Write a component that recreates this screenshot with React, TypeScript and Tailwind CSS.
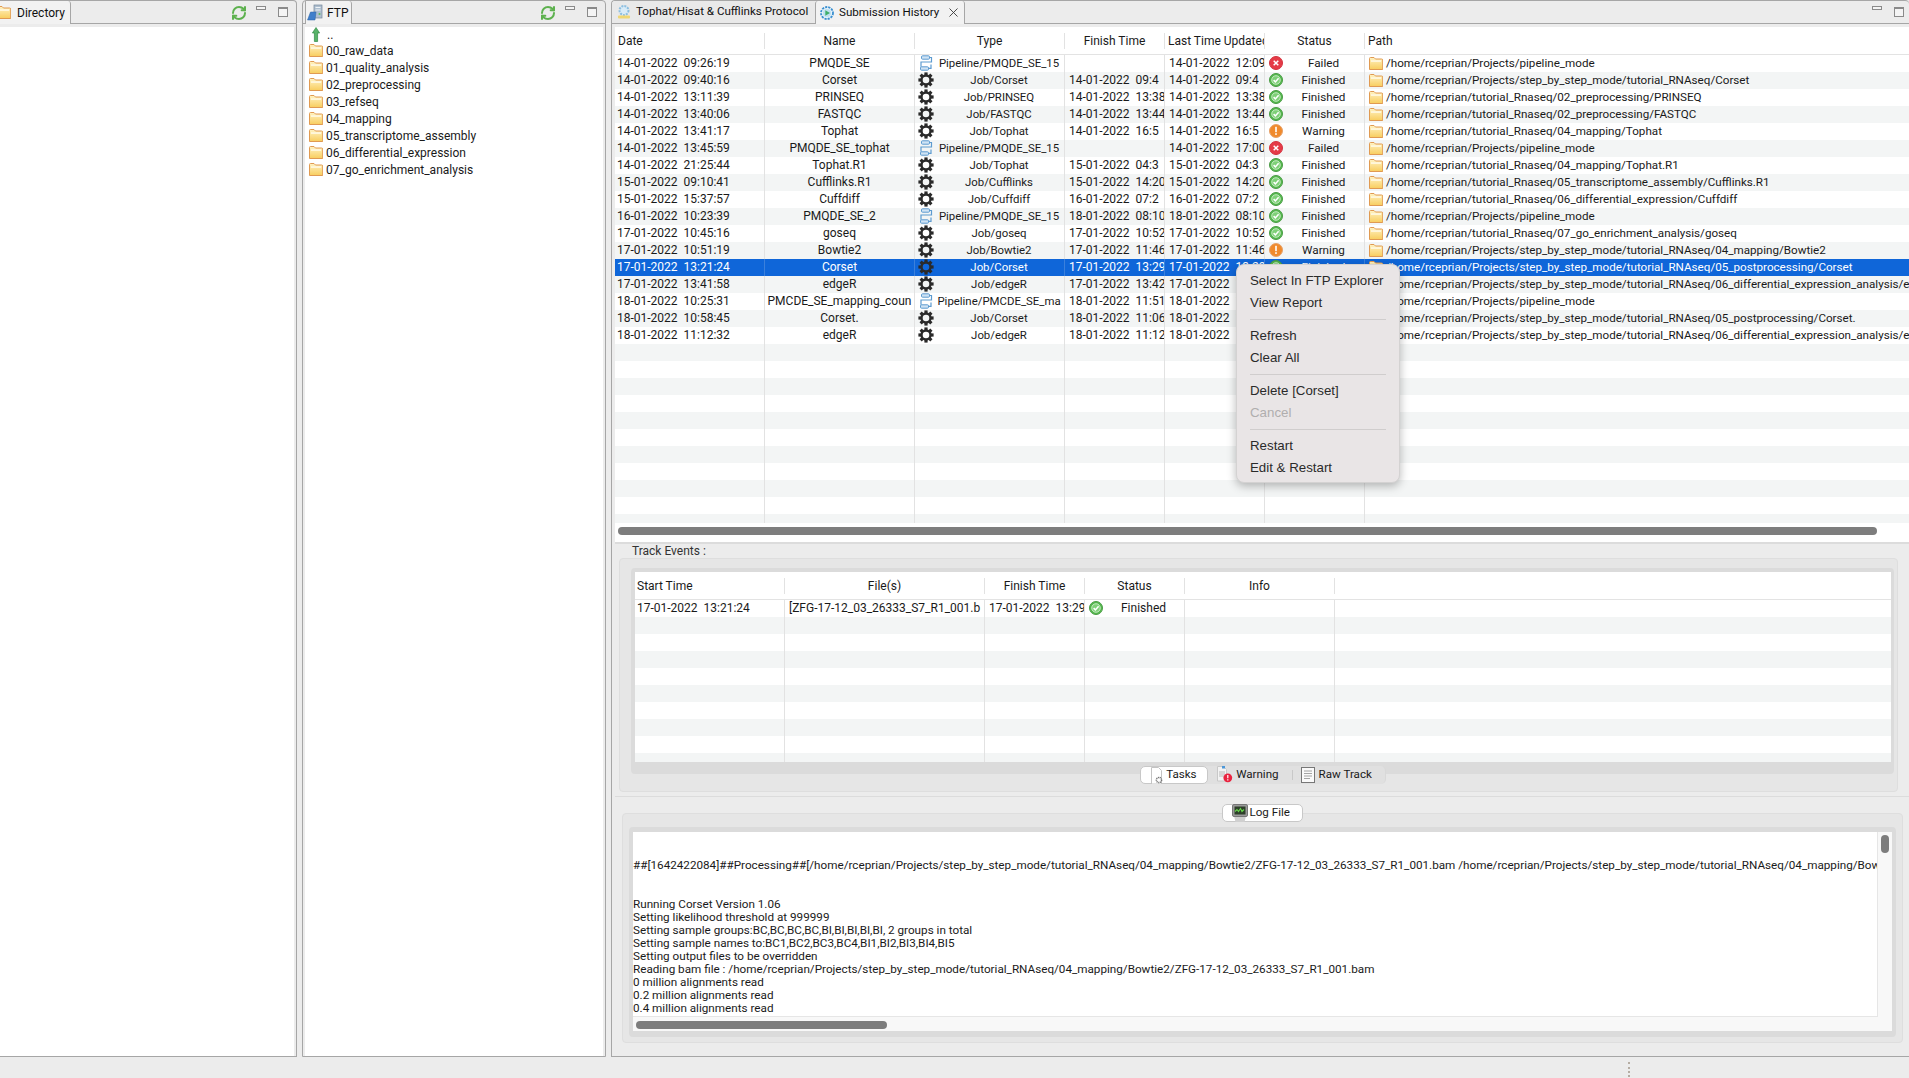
import { RefreshCw, X } from "lucide-react";

type Status = "Failed" | "Finished" | "Warning";

type Submission = {
  date: string;
  name: string;
  pipeline?: boolean;
  type: string;
  finish: string;
  updated: string;
  status: Status;
  path: string;
};

const P = "/home/rceprian/Projects";
const T = "/home/rceprian/tutorial_Rnaseq";
const S = "/home/rceprian/Projects/step_by_step_mode/tutorial_RNAseq";

const submissions: Submission[] = [
  { date: "14-01-2022  09:26:19", name: "PMQDE_SE", pipeline: true, type: "Pipeline/PMQDE_SE_15", finish: "", updated: "14-01-2022  12:09", status: "Failed", path: `${P}/pipeline_mode` },
  { date: "14-01-2022  09:40:16", name: "Corset", type: "Job/Corset", finish: "14-01-2022  09:4", updated: "14-01-2022  09:4", status: "Finished", path: `${S}/Corset` },
  { date: "14-01-2022  13:11:39", name: "PRINSEQ", type: "Job/PRINSEQ", finish: "14-01-2022  13:38", updated: "14-01-2022  13:38", status: "Finished", path: `${T}/02_preprocessing/PRINSEQ` },
  { date: "14-01-2022  13:40:06", name: "FASTQC", type: "Job/FASTQC", finish: "14-01-2022  13:44", updated: "14-01-2022  13:44", status: "Finished", path: `${T}/02_preprocessing/FASTQC` },
  { date: "14-01-2022  13:41:17", name: "Tophat", type: "Job/Tophat", finish: "14-01-2022  16:5", updated: "14-01-2022  16:5", status: "Warning", path: `${T}/04_mapping/Tophat` },
  { date: "14-01-2022  13:45:59", name: "PMQDE_SE_tophat", pipeline: true, type: "Pipeline/PMQDE_SE_15", finish: "", updated: "14-01-2022  17:00", status: "Failed", path: `${P}/pipeline_mode` },
  { date: "14-01-2022  21:25:44", name: "Tophat.R1", type: "Job/Tophat", finish: "15-01-2022  04:3", updated: "15-01-2022  04:3", status: "Finished", path: `${T}/04_mapping/Tophat.R1` },
  { date: "15-01-2022  09:10:41", name: "Cufflinks.R1", type: "Job/Cufflinks", finish: "15-01-2022  14:20", updated: "15-01-2022  14:20", status: "Finished", path: `${T}/05_transcriptome_assembly/Cufflinks.R1` },
  { date: "15-01-2022  15:37:57", name: "Cuffdiff", type: "Job/Cuffdiff", finish: "16-01-2022  07:2", updated: "16-01-2022  07:2", status: "Finished", path: `${T}/06_differential_expression/Cuffdiff` },
  { date: "16-01-2022  10:23:39", name: "PMQDE_SE_2", pipeline: true, type: "Pipeline/PMQDE_SE_15", finish: "18-01-2022  08:10", updated: "18-01-2022  08:10", status: "Finished", path: `${P}/pipeline_mode` },
  { date: "17-01-2022  10:45:16", name: "goseq", type: "Job/goseq", finish: "17-01-2022  10:52", updated: "17-01-2022  10:52", status: "Finished", path: `${T}/07_go_enrichment_analysis/goseq` },
  { date: "17-01-2022  10:51:19", name: "Bowtie2", type: "Job/Bowtie2", finish: "17-01-2022  11:46", updated: "17-01-2022  11:46", status: "Warning", path: `${S}/04_mapping/Bowtie2` },
  { date: "17-01-2022  13:21:24", name: "Corset", type: "Job/Corset", finish: "17-01-2022  13:29", updated: "17-01-2022  13:29", status: "Finished", path: `${S}/05_postprocessing/Corset` },
  { date: "17-01-2022  13:41:58", name: "edgeR", type: "Job/edgeR", finish: "17-01-2022  13:42", updated: "17-01-2022  13:42", status: "Finished", path: `${S}/06_differential_expression_analysis/edgeR` },
  { date: "18-01-2022  10:25:31", name: "PMCDE_SE_mapping_coun", pipeline: true, type: "Pipeline/PMCDE_SE_ma", finish: "18-01-2022  11:51", updated: "18-01-2022  11:51", status: "Finished", path: `${P}/pipeline_mode` },
  { date: "18-01-2022  10:58:45", name: "Corset.", type: "Job/Corset", finish: "18-01-2022  11:06", updated: "18-01-2022  11:06", status: "Finished", path: `${S}/05_postprocessing/Corset.` },
  { date: "18-01-2022  11:12:32", name: "edgeR", type: "Job/edgeR", finish: "18-01-2022  11:12", updated: "18-01-2022  11:12", status: "Finished", path: `${S}/06_differential_expression_analysis/edgeR` },
];

const ftpFolders = [
  "00_raw_data",
  "01_quality_analysis",
  "02_preprocessing",
  "03_refseq",
  "04_mapping",
  "05_transcriptome_assembly",
  "06_differential_expression",
  "07_go_enrichment_analysis",
];

const logLines = [
  "",
  "",
  "##[1642422084]##Processing##[/home/rceprian/Projects/step_by_step_mode/tutorial_RNAseq/04_mapping/Bowtie2/ZFG-17-12_03_26333_S7_R1_001.bam /home/rceprian/Projects/step_by_step_mode/tutorial_RNAseq/04_mapping/Bowtie2/ZFG-17-12_03_26333_S7_R2_001.bam",
  "",
  "",
  "Running Corset Version 1.06",
  "Setting likelihood threshold at 999999",
  "Setting sample groups:BC,BC,BC,BC,BI,BI,BI,BI,BI, 2 groups in total",
  "Setting sample names to:BC1,BC2,BC3,BC4,BI1,BI2,BI3,BI4,BI5",
  "Setting output files to be overridden",
  "Reading bam file : /home/rceprian/Projects/step_by_step_mode/tutorial_RNAseq/04_mapping/Bowtie2/ZFG-17-12_03_26333_S7_R1_001.bam",
  "0 million alignments read",
  "0.2 million alignments read",
  "0.4 million alignments read",
  "0.6 million alignments read",
];

const FolderIcon = ({ className = "" }: { className?: string }) => (
  <svg className={`w-[14px] h-[13px] shrink-0 ${className}`} viewBox="0 0 14 13">
    <defs>
      <linearGradient id="folderFill" x1="0" y1="0" x2="0" y2="1">
        <stop offset="0" stopColor="#fff3c4" />
        <stop offset="1" stopColor="#f8cd5e" />
      </linearGradient>
    </defs>
    <path d="M.5 12.5V1.5q0-1 1-1h3.5l1.5 1.5h6q1.2 0 1.2 1v9.5z" fill="url(#folderFill)" stroke="#e09a52" />
    <rect x="2" y="3.4" width="10" height="1.3" fill="#fffdf2" />
  </svg>
);

const GearIcon = () => (
  <svg className="w-[16px] h-[16px] shrink-0 -mt-[1px]" viewBox="0 0 16 16">
    <g fill="#2a2a2a">
      {[0, 45, 90, 135, 180, 225, 270, 315].map((angle) => (
        <rect key={angle} x="6.4" y="0.4" width="3.2" height="3.4" transform={`rotate(${angle} 8 8)`} />
      ))}
    </g>
    <circle cx="8" cy="8" r="4.5" fill="none" stroke="#2a2a2a" strokeWidth="2.4" />
  </svg>
);

const PipelineIcon = () => (
  <svg className="w-[16px] h-[16px] shrink-0 -mt-[1px]" viewBox="0 0 16 16">
    <g fill="#cfe3f4" stroke="#5d9bd0" strokeWidth="1">
      <rect x="3.5" y="0.8" width="8" height="3.4" rx="1" />
      <rect x="2.5" y="11.8" width="8" height="3.4" rx="1" />
    </g>
    <path d="M11.5 2.5h2v4.5H3v4.8M13 9.5v3.8h-2.5" fill="none" stroke="#5d9bd0" strokeWidth="1.2" />
  </svg>
);

const StatusIcon = ({ status }: { status: Status }) => {
  const fill = status === "Failed" ? "#e53b47" : status === "Warning" ? "#f08a2c" : "#55b94e";
  const ring = status === "Failed" ? "#d3323e" : status === "Warning" ? "#e6a26a" : "#4a9a45";
  return (
    <svg className="w-[14px] h-[14px] shrink-0 -mt-[1px]" viewBox="0 0 14 14">
      <circle cx="7" cy="7" r="6.5" fill={fill} stroke={ring} />
      {status === "Finished" && (
        <>
          <circle cx="7" cy="7" r="4.3" fill="#7ed077" stroke="#ffffff" strokeWidth="0.6" />
          <path d="M4.6 7.1l1.8 1.8 3.2-3.6" fill="none" stroke="#ffffff" strokeWidth="1.5" />
        </>
      )}
      {status === "Failed" && <path d="M4.7 4.7l4.6 4.6M9.3 4.7l-4.6 4.6" stroke="#ffffff" strokeWidth="1.5" />}
      {status === "Warning" && (
        <>
          <rect x="6.2" y="2.8" width="1.6" height="5.4" fill="#ffffff" />
          <rect x="6.2" y="9.2" width="1.6" height="1.7" fill="#ffffff" />
        </>
      )}
    </svg>
  );
};

const UpArrowIcon = () => (
  <svg className="w-[8px] h-[15px] shrink-0" viewBox="0 0 8 15">
    <path d="M4 .5L7.6 6H5.6v8.5H2.4V6H.4z" fill="#58b368" stroke="#2f8a45" strokeWidth="0.7" />
  </svg>
);

const FtpIcon = () => (
  <svg className="w-[16px] h-[17px] shrink-0" viewBox="0 0 16 17">
    <rect x="7" y="1" width="8" height="13" fill="#aebfcf" stroke="#76889a" strokeWidth="0.7" />
    <rect x="8.5" y="3" width="5" height="1" fill="#eef3f7" />
    <rect x="8.5" y="5.5" width="5" height="1" fill="#eef3f7" />
    <circle cx="12.5" cy="10" r="1" fill="#5cb85c" />
    <path d="M0.5 16l3-8h5.5l-1 8z" fill="#3f7fcb" stroke="#2b62a6" strokeWidth="0.5" />
  </svg>
);

const ProtocolIcon = () => (
  <svg className="w-[16px] h-[16px] shrink-0" viewBox="0 0 16 16">
    <circle cx="8" cy="6.5" r="4.5" fill="#d9ecf8" stroke="#8dbfe0" strokeWidth="2" strokeDasharray="2 1" />
    <rect x="2" y="11.5" width="12" height="3" rx="1" fill="#efd774" />
  </svg>
);

const HistoryIcon = () => (
  <svg className="w-[16px] h-[16px] shrink-0" viewBox="0 0 16 16">
    <circle cx="8" cy="8" r="6" fill="#e6f2fa" stroke="#3a8fd0" strokeWidth="1.8" strokeDasharray="2.2 1" />
    <circle cx="8" cy="8" r="4" fill="#bfe0f0" />
    <path d="M6.3 5.2L11 8l-4.7 2.8z" fill="#3fae6a" />
  </svg>
);

const TasksIcon = () => (
  <svg className="w-[15px] h-[17px] shrink-0" viewBox="0 0 15 17">
    <path d="M1.5.5h7l3 3V17h-10z" fill="#ffffff" stroke="#c4c4c4" />
    <circle cx="9" cy="13" r="2.6" fill="none" stroke="#777777" strokeWidth="1.5" strokeDasharray="1.2 .6" />
  </svg>
);

const WarningDocIcon = () => (
  <svg className="w-[16px] h-[17px] shrink-0" viewBox="0 0 16 17">
    <path d="M.5.5h6l3 3V15H.5z" fill="#f3f3f3" stroke="#c8c8c8" />
    <path d="M2 6h6M2 8h6M2 10h5" stroke="#a8a8a8" strokeWidth="0.8" />
    <rect x="5" y="0" width="3" height="2.5" fill="#4c97d8" />
    <circle cx="10.8" cy="11.8" r="4.4" fill="#e9233f" />
    <path d="M10.8 9v3.2M10.8 13.3v1.2" stroke="#ffffff" strokeWidth="1.2" />
  </svg>
);

const RawTrackIcon = () => (
  <svg className="w-[14px] h-[16px] shrink-0" viewBox="0 0 14 16">
    <rect x="0.5" y="0.5" width="13" height="15" fill="#fafafa" stroke="#777777" />
    <path d="M3 4h8M3 6.5h8M3 9h8M3 11.5h6" stroke="#9a9a9a" strokeWidth="0.9" />
  </svg>
);

const LogFileIcon = () => (
  <svg className="w-[16px] h-[18px] shrink-0" viewBox="0 0 16 18">
    <path d="M2 12h12l-1.5 6h-9z" fill="#d0d0d0" />
    <rect x="0.5" y="0.5" width="15" height="12" rx="1.5" fill="#9b9b9b" stroke="#777777" />
    <rect x="2.5" y="2.5" width="11" height="8" fill="#2e3f2a" />
    <path d="M3 7.5l2-2 1.5 2 2-3 1.5 3 2-2" fill="none" stroke="#66d84a" strokeWidth="1.1" />
  </svg>
);

const PanelControls = () => (
  <div className="flex items-start">
    <span className="block mt-[5px] w-[10px] h-[4px] border border-[#8a8a8a] bg-[#f4f4f4]" />
    <span className="block ml-[12px] mt-[6px] w-[10px] h-[10px] border border-[#8a8a8a] border-t-2 bg-[#f4f4f4]" />
  </div>
);

const TabBar = ({ children }: { children: React.ReactNode }) => (
  <div className="flex items-stretch h-[22px] border-b border-[#a6a6a6] box-content">{children}</div>
);

const SideTab = ({ icon, label, className }: { icon: React.ReactNode; label: string; className: string }) => (
  <div className={`flex items-center gap-[4px] h-[23px] border-r border-[#a6a6a6] bg-[#f2f2f2] rounded-tr-[3px] text-[12px] text-[#111] ${className}`}>
    {icon}
    <span>{label}</span>
  </div>
);

const Row = ({ item, index }: { item?: Submission; index: number }) => {
  const selected = index === 12;
  const rowColor = selected ? "bg-[#0f66d9] text-white" : index % 2 === 1 ? "bg-[#f3f5f5]" : "bg-white";
  const lineColor = selected ? "border-[#3b80dc]" : "border-[#e2e2e2]";
  const cell = `h-[17px] border-r overflow-hidden whitespace-pre flex items-center ${lineColor}`;
  return (
    <div className={`grid grid-cols-[150px_150px_150px_100px_100px_100px_1fr] h-[17px] leading-[17px] ${rowColor}`}>
      <div className={`${cell} pl-[2px]`}>{item?.date}</div>
      <div className={`${cell} justify-center`}>{item?.name}</div>
      <div className={`${cell} pl-[3px]`}>
        {item && (item.pipeline ? <PipelineIcon /> : <GearIcon />)}
        <span className="flex-1 text-center whitespace-nowrap overflow-hidden text-[11.4px]">{item?.type}</span>
      </div>
      <div className={`${cell} pl-[4px]`}>{item?.finish}</div>
      <div className={`${cell} pl-[4px]`}>{item?.updated}</div>
      <div className={`${cell} pl-[4px]`}>
        {item && <StatusIcon status={item.status} />}
        <span className="flex-1 text-center text-[11.7px]">{item?.status}</span>
      </div>
      <div className="h-[17px] overflow-hidden whitespace-pre flex items-center pl-[4px] gap-[3px] text-[11.65px]">
        {item && <FolderIcon />}
        {item?.path}
      </div>
    </div>
  );
};

const ContextMenu = () => (
  <div className="absolute left-[1236px] top-[264px] w-[164px] h-[219px] rounded-[8px] bg-[#e9e5e6] border border-[#d4d2d2] shadow-[0_3px_10px_rgba(0,0,0,0.28)] text-[13.3px] text-[#2a2a2a] pt-[5px] z-20 font-['Liberation_Sans',Arial,sans-serif]">
    {[
      ["Select In FTP Explorer", "View Report"],
      ["Refresh", "Clear All"],
      ["Delete [Corset]", "Cancel"],
      ["Restart", "Edit & Restart"],
    ].map((group, g) => (
      <div key={g}>
        {g > 0 && <div className="h-px bg-[#d0cdcd] ml-[13px] mr-[13px] my-[5px]" />}
        {group.map((label) => (
          <div key={label} className={`h-[22px] leading-[22px] pl-[13px] whitespace-nowrap ${label === "Cancel" ? "text-[#b0aeae]" : ""}`}>
            {label}
          </div>
        ))}
      </div>
    ))}
  </div>
);

export default function App() {
  return (
    <div className="relative w-[1909px] h-[1078px] overflow-hidden bg-[#ececec] text-[12px] text-[#1a1a1a] font-['Roboto','Liberation_Sans',sans-serif]">
      <div className="flex h-[1057px] gap-[5px]">
        {/* Directory panel */}
        <section className="w-[297px] h-full flex flex-col border border-l-0 border-[#a6a6a6] rounded-tr-[4px] overflow-hidden">
          <TabBar>
            <SideTab className="pr-[5px] -ml-[3px] gap-[6px]" icon={<FolderIcon />} label="Directory" />
            <div className="flex-1 flex justify-end pr-[8px]">
              <RefreshCw className="w-[16px] h-[16px] mt-[4px] mr-[9px] text-[#5db14e]" strokeWidth={3} />
              <PanelControls />
            </div>
          </TabBar>
          <div className="flex-1 mt-[3px] mr-[2px] bg-white" />
        </section>

        {/* FTP panel */}
        <section className="w-[304px] h-full flex flex-col border border-[#a6a6a6] rounded-t-[4px] overflow-hidden">
          <TabBar>
            <SideTab className="ml-[2px] pl-[1px] pr-[3px] border-l" icon={<FtpIcon />} label="FTP" />
            <div className="flex-1 flex justify-end pr-[8px]">
              <RefreshCw className="w-[16px] h-[16px] mt-[4px] mr-[9px] text-[#5db14e]" strokeWidth={3} />
              <PanelControls />
            </div>
          </TabBar>
          <div className="flex-1 mt-[3px] mx-[2px] bg-white">
            <div className="flex items-center h-[15px] pl-[7px] gap-[7px]">
              <UpArrowIcon />
              <span>..</span>
            </div>
            {ftpFolders.map((folder) => (
              <div key={folder} className="flex items-center h-[17px] pl-[4px] gap-[3px]">
                <FolderIcon />
                <span>{folder}</span>
              </div>
            ))}
          </div>
        </section>

        {/* Main panel */}
        <section className="flex-1 min-w-0 h-full flex flex-col border border-r-0 border-[#a6a6a6] rounded-t-[4px] overflow-hidden">
          <TabBar>
            <div className="flex items-center gap-[4px] pl-[4px] w-[203px] text-[11.6px] text-[#111] bg-[#e9e9e9]">
              <ProtocolIcon />
              <span className="whitespace-nowrap">Tophat/Hisat & Cufflinks Protocol</span>
            </div>
            <div className="flex items-center h-[23px] w-[150px] pl-[3px] gap-[4px] border-x border-[#a6a6a6] bg-[#f2f2f2] rounded-t-[3px] text-[11.6px] text-[#111]">
              <HistoryIcon />
              <span className="whitespace-nowrap">Submission History</span>
              <X className="w-[15px] h-[15px] ml-[3px] text-[#333]" strokeWidth={1.4} />
            </div>
            <div className="flex-1 flex justify-end pr-[5px]">
              <PanelControls />
            </div>
          </TabBar>

          <div className="flex-1 flex flex-col pt-[3px] pl-[3px] min-h-0">
            {/* Submission table */}
            <div className="h-[515px] bg-white flex flex-col">
              <div className="grid grid-cols-[150px_150px_150px_100px_100px_100px_1fr] h-[28px] shrink-0 items-center border-b border-[#e3e3e3]">
                <div className="h-[16px] leading-[16px] pl-[3px] border-r border-[#e2e2e2]">Date</div>
                <div className="h-[16px] leading-[16px] text-center border-r border-[#e2e2e2]">Name</div>
                <div className="h-[16px] leading-[16px] text-center border-r border-[#e2e2e2]">Type</div>
                <div className="h-[16px] leading-[16px] text-center border-r border-[#e2e2e2]">Finish Time</div>
                <div className="h-[16px] leading-[16px] pl-[3px] border-r border-[#e2e2e2] overflow-hidden whitespace-nowrap">Last Time Updated</div>
                <div className="h-[16px] leading-[16px] text-center border-r border-[#e2e2e2]">Status</div>
                <div className="h-[16px] leading-[16px] pl-[3px]">Path</div>
              </div>
              <div className="h-[468px] overflow-hidden shrink-0">
                {Array.from({ length: 28 }, (_, i) => (
                  <Row key={i} item={submissions[i]} index={i} />
                ))}
              </div>
              <div className="flex-1 pt-[4px] pl-[3px] pr-[32px]">
                <div className="h-[8px] rounded-full bg-[#7d7d7d]" />
              </div>
            </div>

            {/* Track events */}
            <div className="h-[254px] border-t-2 border-[#dcdcdc] flex flex-col shrink-0">
              <div className="h-[14px] leading-[14px] pl-[17px] text-[#333]">Track Events :</div>
              <div className="h-[234px] ml-[4px] mr-[11px] rounded-[4px] bg-[#e6e6e6] border border-[#dedede] pt-[9px] pl-[11px] pr-[3px]">
                <div className="h-[206px] rounded-[4px] bg-[#dbdbdb] pt-[4px] pl-[4px] pr-[3px]">
                  <div className="h-[190px] bg-white overflow-hidden">
                    <div className="grid grid-cols-[150px_200px_100px_100px_150px_1fr] h-[28px] items-center border-b border-[#e3e3e3]">
                      <div className="h-[16px] leading-[16px] pl-[2px] border-r border-[#e2e2e2]">Start Time</div>
                      <div className="h-[16px] leading-[16px] text-center border-r border-[#e2e2e2]">File(s)</div>
                      <div className="h-[16px] leading-[16px] text-center border-r border-[#e2e2e2]">Finish Time</div>
                      <div className="h-[16px] leading-[16px] text-center border-r border-[#e2e2e2]">Status</div>
                      <div className="h-[16px] leading-[16px] text-center border-r border-[#e2e2e2]">Info</div>
                    </div>
                    {Array.from({ length: 10 }, (_, i) => (
                      <div key={i} className={`grid grid-cols-[150px_200px_100px_100px_150px_1fr] h-[17px] leading-[17px] ${i % 2 === 1 ? "bg-[#f3f5f5]" : "bg-white"}`}>
                        <div className="border-r border-[#e2e2e2] pl-[2px] whitespace-pre overflow-hidden">{i === 0 && "17-01-2022  13:21:24"}</div>
                        <div className="border-r border-[#e2e2e2] pl-[4px] whitespace-pre overflow-hidden">{i === 0 && "[ZFG-17-12_03_26333_S7_R1_001.b"}</div>
                        <div className="border-r border-[#e2e2e2] pl-[4px] whitespace-pre overflow-hidden">{i === 0 && "17-01-2022  13:29"}</div>
                        <div className="border-r border-[#e2e2e2] pl-[4px] flex items-center">
                          {i === 0 && <StatusIcon status="Finished" />}
                          {i === 0 && <span className="flex-1 text-center">Finished</span>}
                        </div>
                        <div className="border-r border-[#e2e2e2]" />
                      </div>
                    ))}
                  </div>
                  <div className="flex justify-center pt-[4px] text-[11.6px]">
                    <div className="flex items-center h-[18px] rounded-[5px] bg-[#e0e0e0] border-r border-[#d8d8d8]">
                      <div className="flex items-center h-[18px] w-[68px] pl-[9px] gap-[1px] bg-white rounded-[5px] border border-[#c8c8c8]">
                        <TasksIcon />
                        <span>Tasks</span>
                      </div>
                      <div className="flex items-center pl-[9px] gap-[3px]">
                        <WarningDocIcon />
                        <span>Warning</span>
                      </div>
                      <span className="block h-[10px] w-px bg-[#c8c8c8] ml-[13px] mr-[8px]" />
                      <div className="flex items-center gap-[4px] pr-[13px]">
                        <RawTrackIcon />
                        <span>Raw Track</span>
                      </div>
                    </div>
                  </div>
                </div>
              </div>
            </div>

            {/* Log file */}
            <div className="flex-1 border-t border-[#dcdcdc] flex flex-col items-stretch pt-[7px] min-h-0">
              <div className="flex justify-center -mb-[9px] relative z-10 text-[11.6px]">
                <div className="flex items-center h-[18px] w-[81px] pl-[9px] gap-[2px] rounded-[5px] bg-white border border-[#c8c8c8]">
                  <LogFileIcon />
                  <span>Log File</span>
                </div>
              </div>
              <div className="h-[230px] ml-[7px] mr-[6px] rounded-[4px] bg-[#e6e6e6] border border-[#dedede] pt-[13px] px-[6px]">
                <div className="h-[210px] rounded-[4px] bg-[#dbdbdb] py-[5px] pl-[4px] pr-[4px]">
                  <div className="h-[199px] bg-[#f8f8f8] flex flex-col">
                    <div className="h-[185px] flex shrink-0">
                      <div className="flex-1 min-w-0 bg-white overflow-hidden border-r border-b border-[#e6e6e6] pt-px text-[11.7px]">
                        {logLines.map((line, i) => (
                          <div key={i} className="h-[13px] leading-[13px] whitespace-pre">{line}</div>
                        ))}
                      </div>
                      <div className="w-[14px] pt-[3px] pl-[3px]">
                        <div className="w-[8px] h-[18px] rounded-full bg-[#7d7d7d]" />
                      </div>
                    </div>
                    <div className="pt-[4px] pl-[3px]">
                      <div className="w-[251px] h-[8px] rounded-full bg-[#7d7d7d]" />
                    </div>
                  </div>
                </div>
              </div>
            </div>
          </div>
        </section>
      </div>

      {/* Status bar */}
      <div className="h-[21px] flex justify-end pr-[279px] pt-[5px]">
        <div className="w-[2px] h-[15px] border-l-2 border-dotted border-[#b5ada3]" />
      </div>

      <ContextMenu />
    </div>
  );
}
